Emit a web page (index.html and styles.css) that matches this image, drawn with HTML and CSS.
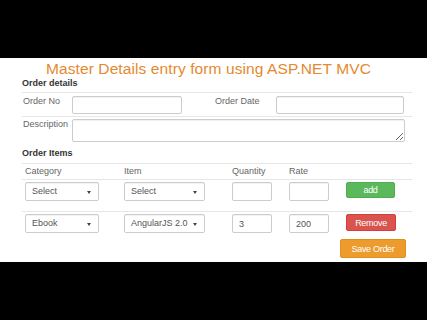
FILE: index.html
```html
<!DOCTYPE html>
<html>
<head>
	<meta charset="utf-8">
	<title>Master Details entry form using ASP.NET MVC</title>
	<link rel="stylesheet" href="styles.css">
</head>
<body>

	<div class="panel">
		<h1 class="title">Master Details entry form using ASP.NET MVC</h1>

		<!-- master part -->
		<div class="section-head">Order details</div>
		<div class="detail-row first">
			<label class="lbl">Order No</label>
			<input class="txt order-no" type="text">
			<label class="lbl date-lbl">Order Date</label>
			<input class="txt order-date" type="text">
		</div>
		<div class="detail-row">
			<label class="lbl">Description</label>
			<textarea class="txt descr"></textarea>
		</div>

		<!-- details part -->
		<div class="section-head items-head">Order Items</div>
		<div class="items">
			<div class="irow head">
				<div class="cell">Category</div>
				<div class="cell">Item</div>
				<div class="cell">Quantity</div>
				<div class="cell">Rate</div>
				<div class="cell"></div>
			</div>
			<div class="irow">
				<div class="cell"><div class="sel cat">Select<span class="arr"></span></div></div>
				<div class="cell"><div class="sel item">Select<span class="arr"></span></div></div>
				<div class="cell"><input class="txt qty" type="text"></div>
				<div class="cell"><input class="txt rate" type="text"></div>
				<div class="cell"><button class="btn add">add</button></div>
			</div>
			<div class="irow last">
				<div class="cell"><div class="sel cat">Ebook<span class="arr"></span></div></div>
				<div class="cell"><div class="sel item">AngularJS 2.0<span class="arr"></span></div></div>
				<div class="cell"><input class="txt qty" type="text" value="3"></div>
				<div class="cell"><input class="txt rate" type="text" value="200"></div>
				<div class="cell"><button class="btn remove">Remove</button></div>
			</div>
		</div>

		<div class="save-bar">
			<button class="btn save">Save Order</button>
		</div>
	</div>

</body>
</html>
```

FILE: styles.css
```css
body        { margin: 0; background: #000; font-family: "Liberation Sans", Arial, sans-serif; }

.panel      { background: #fff; margin-top: 58px; height: 204px; box-sizing: border-box;
              padding: 2px 15px 0 22px; }

.title      { margin: 0; padding-right: 17px; text-align: center; font-size: 15.5px; font-weight: normal;
              line-height: 18px; color: #e5892f; letter-spacing: 0.1px; }

.section-head { font-size: 9px; font-weight: bold; line-height: 11px; color: #333; margin-bottom: 3px; }
.items-head { margin-top: 6px; margin-bottom: 4px; }

.detail-row { display: flex; align-items: flex-start; border-top: 1px solid #e7e7e7; padding-top: 2px; }
.detail-row.first { padding-top: 3px; padding-bottom: 2px; }

.lbl        { width: 49px; padding-left: 1px; font-size: 9px; line-height: 11px; color: #666; }
.date-lbl   { width: 61px; margin-left: 32px; }

.txt        { box-sizing: border-box; height: 19px; margin: 0; padding: 0 6px; border: 1px solid #ccc;
              border-radius: 2px; box-shadow: inset 0 1px 1px rgba(0,0,0,0.06);
              font-family: inherit; font-size: 9px; color: #555; background: #fff; }
.order-no   { width: 110px; height: 18px; }
.order-date { width: 128px; height: 18px; }
.descr      { width: 333px; height: 23px; resize: vertical; display: block; }

.irow       { display: grid; grid-template-columns: 99px 108px 57px 57px 1fr; border-top: 1px solid #e7e7e7;
              padding: 2px 0 10px; }
.irow.head  { padding: 2px 0 2px; }
.irow.last  { padding-bottom: 3px; }
.cell       { padding-left: 3px; font-size: 9px; line-height: 11px; color: #666; }

.sel        { position: relative; box-sizing: border-box; height: 19px; padding-left: 6px; line-height: 17px;
              border: 1px solid #ccc; border-radius: 2px; box-shadow: inset 0 1px 1px rgba(0,0,0,0.06);
              font-size: 9px; color: #555; }
.sel.cat    { width: 74px; }
.sel.item   { width: 81px; }
.arr        { position: absolute; right: 7px; top: 8px; width: 0; height: 0;
              border-left: 2px solid transparent; border-right: 2px solid transparent; border-top: 3px solid #444; }

.qty        { width: 40px; }
.rate       { width: 40px; margin-left: 0; }

.btn        { display: block; box-sizing: border-box; margin: 0; padding: 0; border: 1px solid transparent;
              border-radius: 2px; color: #fff; font-family: inherit; font-size: 9px; letter-spacing: -0.3px; }
.add        { width: 49px; height: 16px; margin-left: 0; background: #5cb85c; border-color: #4cae4c; }
.remove     { width: 50px; height: 17px; background: #d9534f; border-color: #d43f3a; }

.save-bar   { display: flex; justify-content: flex-end; margin-top: 3px; padding-right: 6px; }
.save       { width: 66px; height: 19px; background: #ec9b2c; border-color: #e0901f; }
```
